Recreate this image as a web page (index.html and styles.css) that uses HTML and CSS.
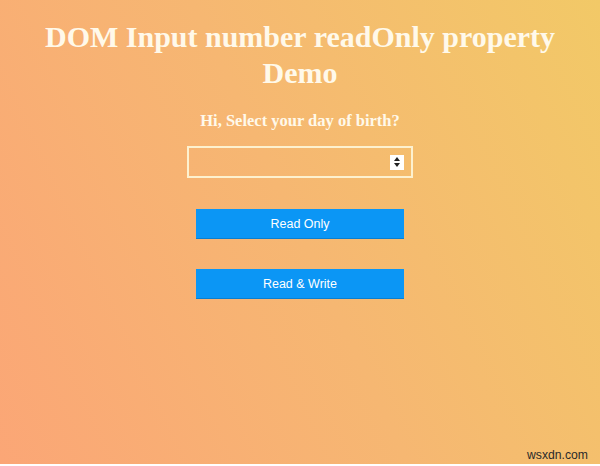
FILE: index.html
```html
<!DOCTYPE html>
<html lang="en">
<head>
<meta charset="utf-8">
<title>DOM Input number readOnly property Demo</title>
<link rel="stylesheet" href="styles.css">
</head>
<body>
<div class="page">
  <h1 class="title">DOM Input number readOnly property Demo</h1>
  <p class="subtitle">Hi, Select your day of birth?</p>
  <div class="numbox">
    <span class="spinner">
      <span class="tri up"></span>
      <span class="tri down"></span>
    </span>
  </div>
  <button class="btn btn-first" type="button">Read Only</button>
  <button class="btn" type="button">Read &amp; Write</button>
  <span class="watermark">wsxdn.com</span>
</div>
</body>
</html>
```

FILE: styles.css
```css
html, body {
  margin: 0;
  padding: 0;
  background: #ffffff;
}
.page {
  position: relative;
  box-sizing: border-box;
  width: 600px;
  height: 464px;
  background: linear-gradient(65deg, #fba676 0%, #f6b772 50%, #f2c967 100%);
  display: flex;
  flex-direction: column;
  align-items: center;
  font-family: "Liberation Serif", "Times New Roman", serif;
  overflow: hidden;
}
.title {
  margin: 19px 0 0;
  width: 560px;
  font-size: 30px;
  line-height: 35.5px;
  font-weight: bold;
  color: #fff9ea;
  text-align: center;
}
.subtitle {
  margin: 21px 0 0;
  font-size: 16.5px;
  line-height: 19px;
  font-weight: bold;
  color: #fff9ea;
}
.numbox {
  margin-top: 16px;
  box-sizing: border-box;
  width: 226px;
  height: 32px;
  border: 2px solid #fdf1cf;
  display: flex;
  align-items: center;
  justify-content: flex-end;
  padding-right: 7px;
}
.spinner {
  width: 14px;
  height: 15px;
  background: #ffffff;
  display: flex;
  flex-direction: column;
  align-items: center;
  justify-content: center;
  gap: 2px;
}
.tri {
  width: 0;
  height: 0;
  border-left: 3.5px solid transparent;
  border-right: 3.5px solid transparent;
}
.tri.up {
  border-bottom: 4px solid #222222;
}
.tri.down {
  border-top: 4px solid #222222;
}
.btn {
  margin-top: 30px;
  box-sizing: border-box;
  width: 208px;
  height: 30px;
  border: none;
  border-bottom: 1px solid #0a7fd0;
  background: #0b96f5;
  color: #ffffff;
  font-family: "Liberation Sans", Arial, sans-serif;
  font-size: 12.5px;
  padding: 0;
}
.btn-first {
  margin-top: 31px;
}
.watermark {
  position: absolute;
  right: 12px;
  bottom: 2px;
  font-family: "Liberation Sans", Arial, sans-serif;
  font-size: 12.2px;
  color: #2a2a2a;
}
```
